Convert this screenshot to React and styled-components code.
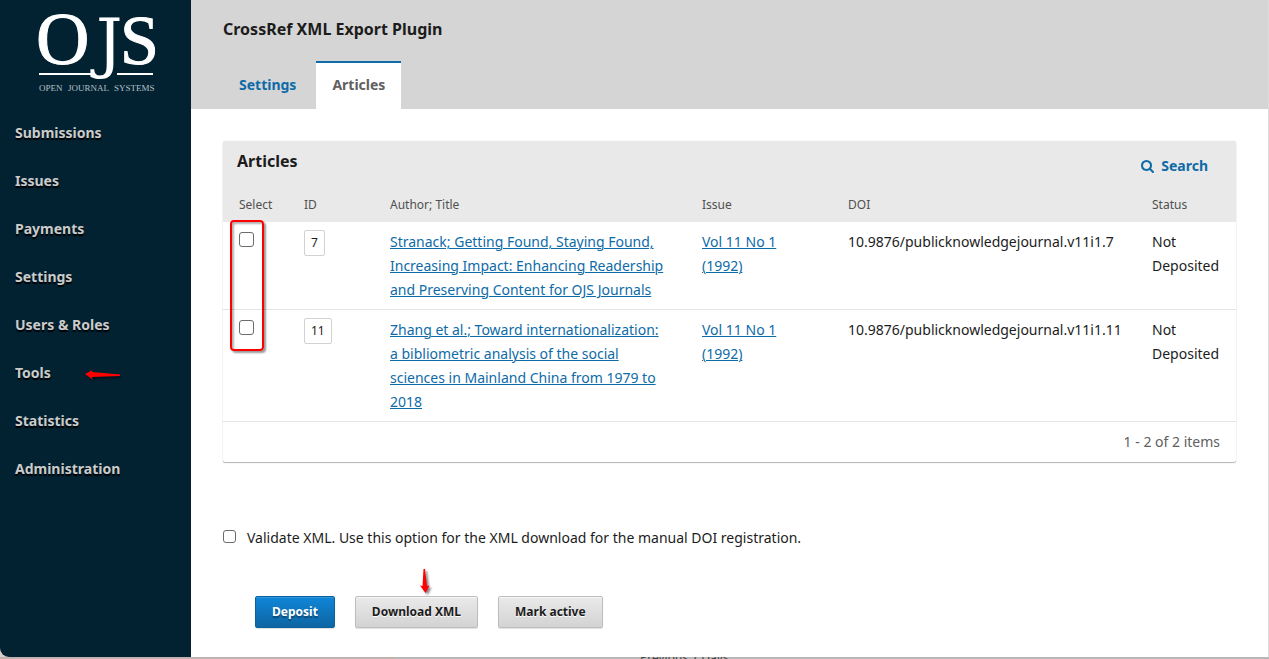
import React from "react";
import styled, { createGlobalStyle } from "styled-components";

const GlobalStyle = createGlobalStyle`
  *, *::before, *::after { box-sizing: border-box; }
  body {
    margin: 0;
    background: #bcbcbc;
    color: #1c1c1c;
    font-family: "Noto Sans", "Open Sans", sans-serif;
    font-size: 14px;
    line-height: 24px;
  }
`;

const Desktop = styled.div`
  display: flex;
  flex-direction: column;
  min-height: 100vh;
`;

const Window = styled.div`
  display: flex;
  flex: 1;
  background: linear-gradient(to right, #d9cdca 191px, #fff 191px);
  border-right: 1px solid #dcdcdc;
`;

const Sidebar = styled.aside`
  flex: none;
  width: 191px;
  background: #022232;
  border-bottom-left-radius: 9px;
`;

const LogoLink = styled.a`
  display: block;
  height: 109px;

  svg { display: block; }
`;

const NavList = styled.ul`
  margin: 0;
  padding: 0;
  list-style: none;
`;

const NavItem = styled.li`
  position: relative;
`;

const NavLink = styled.a`
  display: block;
  padding: 0 15px;
  color: #c9cbcc;
  font-weight: 700;
  line-height: 48px;
  text-decoration: none;
  text-shadow: 0 2px 1px #000;
`;

const Marker = styled.svg`
  position: absolute;
  left: ${(p) => p.$left}px;
  top: ${(p) => p.$top}px;
  overflow: visible;
  pointer-events: none;
  filter: drop-shadow(2px 2px 1px rgba(0, 0, 0, 0.5));
`;

const Main = styled.main`
  flex: 1;
  min-width: 0;
`;

const PageHeader = styled.header`
  padding: 17px 32px 0;
  background: #d5d5d5;
`;

const PageTitle = styled.h1`
  margin: 0 0 20px;
  font-size: 16px;
  line-height: 24px;
`;

const Tabs = styled.nav`
  display: flex;
  gap: 4px;
`;

const Tab = styled.a`
  padding: 0 16px 2px;
  border-top: 2px solid ${(p) => (p.$active ? "#0e6ba8" : "transparent")};
  background: ${(p) => (p.$active ? "#fff" : "transparent")};
  color: ${(p) => (p.$active ? "#606060" : "#0e6ba8")};
  font-weight: 700;
  line-height: 44px;
  text-decoration: none;
`;

const Content = styled.div`
  padding: 32px 32px 24px;
`;

const Grid = styled.section`
  position: relative;
  border-radius: 2px;
  background: #fff;
  box-shadow: 0 0 1px rgba(0, 0, 0, 0.2), 0 1px 1px rgba(0, 0, 0, 0.28);
`;

const GridHeader = styled.div`
  display: flex;
  justify-content: space-between;
  height: 48px;
  padding: 8px 28px 0 14px;
  border-radius: 2px 2px 0 0;
  background: #e9e9e9;
`;

const GridTitle = styled.h2`
  margin: 0;
  font-size: 16px;
  line-height: 24px;
`;

const SearchLink = styled.a`
  display: flex;
  align-items: center;
  gap: 7px;
  height: 34px;
  color: #0e6ba8;
  font-weight: 700;
  text-decoration: none;
`;

const Table = styled.table`
  width: 100%;
  border-collapse: separate;
  border-spacing: 0;
  table-layout: fixed;
`;

const Column = styled.col`
  width: ${(p) => (p.$width ? `${p.$width}px` : "auto")};
`;

const HeadCell = styled.th`
  height: 33px;
  padding: 0 0 2px 16px;
  background: #e9e9e9;
  color: #505050;
  font-size: 12px;
  font-weight: 400;
  text-align: left;
`;

const Cell = styled.td`
  padding: 8px 0 7px 16px;
  border-bottom: 1px solid #e4e4e4;
  vertical-align: top;
`;

const WideCell = styled(Cell)`
  padding-right: 16px;
`;

const RecordLink = styled.a`
  color: #0e6ba8;
  text-decoration-thickness: 1px;
  text-underline-offset: 1px;
`;

const IdBadge = styled.span`
  display: inline-block;
  padding: 0 6px;
  border: 1px solid #d2d2d2;
  border-radius: 2px;
  font-size: 12px;
  line-height: 24px;
  vertical-align: top;
`;

const Checkbox = styled.input`
  appearance: none;
  display: block;
  flex: none;
  width: ${(p) => p.$size}px;
  height: ${(p) => p.$size}px;
  margin: ${(p) => (p.$spaced ? "2px 0 0" : "0 0 3px")};
  border: 1px solid #6b6b6b;
  border-radius: 3px;
  background: #fff;

  &:checked { background: #0e6ba8; }
`;

const GridFooter = styled.div`
  padding: 8px 16px;
  color: #606060;
  text-align: right;
`;

const SelectHighlight = styled.div`
  position: absolute;
  left: 7px;
  top: 79px;
  width: 34px;
  height: 131px;
  border: 2px solid #f00;
  border-radius: 4px;
  box-shadow: 2px 2px 2px rgba(0, 0, 0, 0.4), inset 2px 2px 2px rgba(0, 0, 0, 0.3);
  pointer-events: none;
`;

const ValidateLabel = styled.label`
  display: flex;
  align-items: center;
  gap: 11px;
  margin-top: 64px;
`;

const Actions = styled.div`
  display: flex;
  gap: 20px;
  margin-top: 46px;
  padding-left: 32px;
`;

const ActionSlot = styled.div`
  position: relative;
`;

const Button = styled.button`
  display: block;
  height: 32px;
  padding: 0 16px;
  border: 1px solid ${(p) => (p.$primary ? "#0b619b" : "#bdbdbd")};
  border-radius: 2px;
  background: ${(p) =>
    p.$primary
      ? "linear-gradient(#1086d8, #0e65a3)"
      : "linear-gradient(#eaeaea, #d3d3d3)"};
  box-shadow: inset 0 1px 0 ${(p) => (p.$primary ? "#3196dc" : "#f6f6f6")},
    0 1px 1px rgba(0, 0, 0, 0.12);
  color: ${(p) => (p.$primary ? "#fff" : "#1c1c1c")};
  font-family: inherit;
  font-size: 12px;
  font-weight: 700;
  line-height: 30px;
  text-shadow: ${(p) => (p.$primary ? "0 2px 1px rgba(0, 0, 0, 0.35)" : "0 1px 0 #fff")};
`;

const Backdrop = styled.div`
  display: flex;
  align-items: center;
  height: 2px;
  overflow: hidden;
  padding-left: 640px;
  background: linear-gradient(to right, #bfb2af 395px, #b8b8b8 395px);
  color: #444;
  font-size: 12px;
  white-space: nowrap;
`;

const navItems = [
  "Submissions",
  "Issues",
  "Payments",
  "Settings",
  "Users & Roles",
  "Tools",
  "Statistics",
  "Administration",
];

const articles = [
  {
    id: 7,
    title:
      "Stranack; Getting Found, Staying Found, Increasing Impact: Enhancing Readership and Preserving Content for OJS Journals",
    doi: "10.9876/publicknowledgejournal.v11i1.7",
  },
  {
    id: 11,
    title:
      "Zhang et al.; Toward internationalization: a bibliometric analysis of the social sciences in Mainland China from 1979 to 2018",
    doi: "10.9876/publicknowledgejournal.v11i1.11",
  },
];

const Logo = () => (
  <svg width="191" height="100" viewBox="0 0 191 100" role="img" aria-label="Open Journal Systems">
    <g fill="#fff" stroke="#fff" fontFamily="Liberation Serif, serif">
      <text x="36" y="64" fontSize="74">O</text>
      <text x="96" y="65" fontFamily="DejaVu Serif, serif" fontSize="66" strokeWidth="0">J</text>
      <text x="120" y="64" fontSize="70">S</text>
    </g>
    <g fill="#fff">
      <rect x="39" y="73" width="53" height="2" />
      <rect x="117" y="73" width="36" height="2" />
    </g>
    <g fill="#b5c0c6" fontFamily="Liberation Serif, serif" fontSize="9">
      <text x="39" y="91">OPEN</text>
      <text x="68" y="91">JOURNAL</text>
      <text x="114" y="91">SYSTEMS</text>
    </g>
  </svg>
);

const SearchIcon = () => (
  <svg width="13" height="13" viewBox="0 128 1664 1664" fill="currentColor" aria-hidden="true">
    <path d="M1152 832q0-185-131.5-316.5t-316.5-131.5-316.5 131.5-131.5 316.5 131.5 316.5 316.5 131.5 316.5-131.5 131.5-316.5zm512 832q0 52-38 90t-90 38q-54 0-90-38l-343-342q-179 124-399 124-143 0-273.5-55.5t-225-150-150-225-55.5-273.5 55.5-273.5 150-225 225-150 273.5-55.5 273.5 55.5 225 150 150 225 55.5 273.5q0 220-124 399l343 343q37 37 37 90z" />
  </svg>
);

const LeftArrow = () => (
  <Marker $left={85} $top={21} width="35" height="10" viewBox="0 0 35 10" aria-hidden="true">
    <path d="M0 4 7.500 0 7 2 35 4.500V6L7 7 7.500 9.500Z" fill="#f00" />
  </Marker>
);

const DownArrow = () => (
  <Marker $left={65} $top={-27} width="10" height="25" viewBox="0 0 10 25" aria-hidden="true">
    <path d="M3.500 0H5L7 17 9.500 16.500 5.500 24 0 16.500 2.500 17Z" fill="#f00" />
  </Marker>
);

export default function App() {
  return (
    <Desktop>
      <GlobalStyle />
      <Window>
        <Sidebar>
          <LogoLink href="#home">
            <Logo />
          </LogoLink>
          <nav>
            <NavList>
              {navItems.map((item) => (
                <NavItem key={item}>
                  <NavLink href="#nav">{item}</NavLink>
                  {item === "Tools" && <LeftArrow />}
                </NavItem>
              ))}
            </NavList>
          </nav>
        </Sidebar>
        <Main>
          <PageHeader>
            <PageTitle>CrossRef XML Export Plugin</PageTitle>
            <Tabs>
              <Tab href="#settings">Settings</Tab>
              <Tab href="#articles" $active aria-current="page">Articles</Tab>
            </Tabs>
          </PageHeader>
          <Content>
            <Grid>
              <GridHeader>
                <GridTitle>Articles</GridTitle>
                <SearchLink href="#search">
                  <SearchIcon />
                  Search
                </SearchLink>
              </GridHeader>
              <Table>
                <colgroup>
                  <Column $width={65} />
                  <Column $width={86} />
                  <Column />
                  <Column $width={146} />
                  <Column $width={304} />
                  <Column $width={100} />
                </colgroup>
                <thead>
                  <tr>
                    <HeadCell>Select</HeadCell>
                    <HeadCell>ID</HeadCell>
                    <HeadCell>Author; Title</HeadCell>
                    <HeadCell>Issue</HeadCell>
                    <HeadCell>DOI</HeadCell>
                    <HeadCell>Status</HeadCell>
                  </tr>
                </thead>
                <tbody>
                  {articles.map((article) => (
                    <tr key={article.id}>
                      <Cell>
                        <Checkbox type="checkbox" $size={15} $spaced aria-label={`Select article ${article.id}`} />
                      </Cell>
                      <Cell><IdBadge>{article.id}</IdBadge></Cell>
                      <WideCell><RecordLink href="#article">{article.title}</RecordLink></WideCell>
                      <WideCell><RecordLink href="#issue">Vol 11 No 1 (1992)</RecordLink></WideCell>
                      <Cell>{article.doi}</Cell>
                      <WideCell>Not Deposited</WideCell>
                    </tr>
                  ))}
                </tbody>
              </Table>
              <GridFooter>1 - 2 of 2 items</GridFooter>
              <SelectHighlight />
            </Grid>
            <ValidateLabel>
              <Checkbox type="checkbox" $size={13} />
              Validate XML. Use this option for the XML download for the manual DOI registration.
            </ValidateLabel>
            <Actions>
              <Button type="button" $primary>Deposit</Button>
              <ActionSlot>
                <Button type="button">Download XML</Button>
                <DownArrow />
              </ActionSlot>
              <Button type="button">Mark active</Button>
            </Actions>
          </Content>
        </Main>
      </Window>
      <Backdrop>Previous 7 Days</Backdrop>
    </Desktop>
  );
}
